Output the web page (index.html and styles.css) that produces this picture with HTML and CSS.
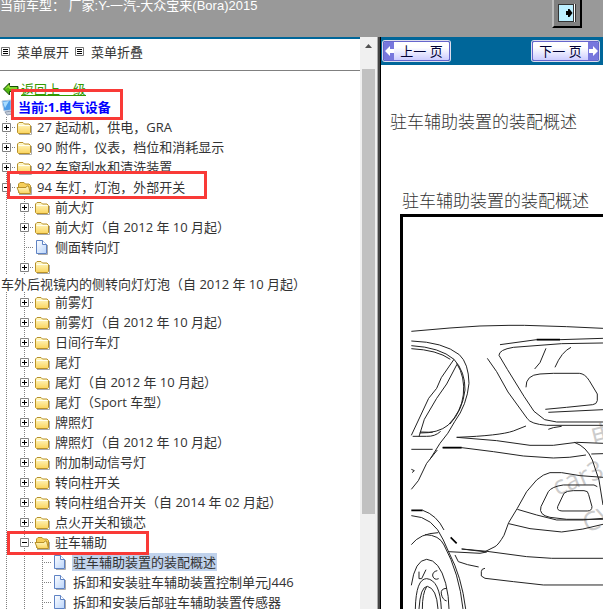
FILE: index.html
```
<!DOCTYPE html>
<html lang="zh-CN">
<head>
  <meta charset="UTF-8">
  <meta name="viewport" content="width=device-width, initial-scale=1.0">
  <title>驻车辅助装置的装配概述</title>
  <link rel="stylesheet" href="styles.css">
</head>
<body>

  <!-- icons used by the tree -->
  <svg class="sprite" width="0" height="0" aria-hidden="true">
    <defs>
      <linearGradient id="gold" x1="0" y1="0" x2="0" y2="1">
        <stop offset="0" stop-color="#fffbd0"/>
        <stop offset="1" stop-color="#fbd45c"/>
      </linearGradient>
      <linearGradient id="sheet" x1="0" y1="0" x2="1" y2="1">
        <stop offset="0" stop-color="#ffffff"/>
        <stop offset="1" stop-color="#b9d4fb"/>
      </linearGradient>
      <symbol id="folder" viewBox="0 -1 18 18">
        <path d="M3 15.500h12.500V7" fill="none" stroke="#aaa" stroke-width="1"/>
        <path d="M1.500 13.500V5l1.500-1.500h4L8.500 5H13l1.500 1.500v7l-1 1h-11z" fill="url(#gold)" stroke="#b8912a"/>
        <path d="M2.500 6.500h11" stroke="#fffef0" fill="none"/>
      </symbol>
      <symbol id="folder-open" viewBox="0 -1 18 18">
        <path d="M3 15.500h12.500V8" fill="none" stroke="#aaa" stroke-width="1"/>
        <path d="M2.500 13.500V5L4 3.500h4L9.500 5H13l1.500 1.500v7l-1 1h-10z" fill="#f6cf5a" stroke="#b8912a"/>
        <path d="M1 8.500h9l1-1.500h1.500l2 7.500h-11z" fill="url(#gold)" stroke="#b8912a"/>
      </symbol>
      <symbol id="page" viewBox="0 -1 18 18">
        <path d="M4 15.500h9.500V6" fill="none" stroke="#aaa"/>
        <path d="M2.500 1.500h6l4 4v9h-10z" fill="url(#sheet)" stroke="#5f83c4"/>
        <path d="M8.500 1.500v4h4" fill="#fff" stroke="#5f83c4"/>
      </symbol>
      <symbol id="plus" viewBox="0 0 9 9">
        <path d="M.5.5h8v8h-8z" fill="#fff" stroke="#808080"/>
        <path d="M2 4.500h5M4.500 2v5" stroke="#000"/>
      </symbol>
      <symbol id="minus" viewBox="0 0 9 9">
        <path d="M.5.5h8v8h-8z" fill="#fff" stroke="#808080"/>
        <path d="M2 4.500h5" stroke="#000"/>
      </symbol>
      <symbol id="list" viewBox="0 0 9 9">
        <path d="M.5.5h8v8h-8z" fill="#fff" stroke="#777"/>
        <path d="M2 2.500h5M2 4.500h5M2 6.500h5" stroke="#000"/>
      </symbol>
    </defs>
  </svg>

  <header class="topbar">
    <p class="car">当前车型： 厂家:Y-一汽-大众宝来(Bora)2015</p>
    <button class="exit" type="button" aria-label="退出">
      <svg width="18" height="18" viewBox="0 0 18 18">
        <path d="M0 0h18v18H0z" fill="#333"/>
        <path d="M1 1h14v16H1z" fill="#bdefff"/>
        <path d="M16.500 0v18" stroke="#fff" stroke-width="1"/>
        <path d="M8 7h2V5h1.500l3 4-3 4H10v-2H8z" fill="#000"/>
      </svg>
    </button>
  </header>

  <div class="frames">
    <nav class="menu">
      <div class="tools">
        <button type="button"><svg width="9" height="9"><use href="#list"/></svg>菜单展开</button>
        <button type="button"><svg width="9" height="9"><use href="#list"/></svg>菜单折叠</button>
      </div>

      <div class="tree">
        <div class="row back">
          <svg width="20" height="18" viewBox="0 0 20 18">
            <path d="M3.500 9l6-6v3.500H18v5H9.500V15z" fill="#4fb810" stroke="#174d05"/>
            <path d="M6 8.500l3-3v2.500h8" fill="none" stroke="#b7ef4b"/>
          </svg>
          <a href="#">返回上一级</a>
        </div>
        <div class="row root">
          <svg width="18" height="18" viewBox="0 0 18 18">
            <path d="M2 3l9-1v10l-7 1z" fill="#4a9be8" stroke="#b9cbe0"/>
            <path d="M3 4l6-1-4 7z" fill="#a9dcff"/>
            <path d="M5 14l7-1v3l-5 1z" fill="#c4ccd8" stroke="#8d9bb0"/>
          </svg>
          <a href="#">当前:1.电气设备</a>
        </div>

        <div class="row"><i class="join"><svg width="9" height="9"><use href="#plus"/></svg></i><svg class="icon"><use href="#folder"/></svg><a href="#">27 起动机，供电，GRA</a></div>
        <div class="row"><i class="join"><svg width="9" height="9"><use href="#plus"/></svg></i><svg class="icon"><use href="#folder"/></svg><a href="#">90 附件，仪表，档位和消耗显示</a></div>
        <div class="row"><i class="join"><svg width="9" height="9"><use href="#plus"/></svg></i><svg class="icon"><use href="#folder"/></svg><a href="#">92 车窗刮水和清洗装置</a></div>
        <div class="row"><i class="join"><svg width="9" height="9"><use href="#minus"/></svg></i><svg class="icon"><use href="#folder-open"/></svg><a href="#">94 车灯，灯泡，外部开关</a></div>

        <div class="branch">
          <div class="row"><i class="join"><svg width="9" height="9"><use href="#plus"/></svg></i><svg class="icon"><use href="#folder"/></svg><a href="#">前大灯</a></div>
          <div class="row"><i class="join"><svg width="9" height="9"><use href="#plus"/></svg></i><svg class="icon"><use href="#folder"/></svg><a href="#">前大灯（自 2012 年 10 月起）</a></div>
          <div class="row"><i class="join"></i><svg class="icon"><use href="#page"/></svg><a href="#">侧面转向灯</a></div>
          <div class="row short"><i class="join"><svg width="9" height="9"><use href="#plus"/></svg></i><svg class="icon"><use href="#folder"/></svg></div>
        </div>
        <div class="wrapped"><a href="#">车外后视镜内的侧转向灯灯泡（自 2012 年 10 月起）</a></div>
        <div class="branch">
          <div class="row"><i class="join"><svg width="9" height="9"><use href="#plus"/></svg></i><svg class="icon"><use href="#folder"/></svg><a href="#">前雾灯</a></div>
          <div class="row"><i class="join"><svg width="9" height="9"><use href="#plus"/></svg></i><svg class="icon"><use href="#folder"/></svg><a href="#">前雾灯（自 2012 年 10 月起）</a></div>
          <div class="row"><i class="join"><svg width="9" height="9"><use href="#plus"/></svg></i><svg class="icon"><use href="#folder"/></svg><a href="#">日间行车灯</a></div>
          <div class="row"><i class="join"><svg width="9" height="9"><use href="#plus"/></svg></i><svg class="icon"><use href="#folder"/></svg><a href="#">尾灯</a></div>
          <div class="row"><i class="join"><svg width="9" height="9"><use href="#plus"/></svg></i><svg class="icon"><use href="#folder"/></svg><a href="#">尾灯（自 2012 年 10 月起）</a></div>
          <div class="row"><i class="join"><svg width="9" height="9"><use href="#plus"/></svg></i><svg class="icon"><use href="#folder"/></svg><a href="#">尾灯（Sport 车型）</a></div>
          <div class="row"><i class="join"><svg width="9" height="9"><use href="#plus"/></svg></i><svg class="icon"><use href="#folder"/></svg><a href="#">牌照灯</a></div>
          <div class="row"><i class="join"><svg width="9" height="9"><use href="#plus"/></svg></i><svg class="icon"><use href="#folder"/></svg><a href="#">牌照灯（自 2012 年 10 月起）</a></div>
          <div class="row"><i class="join"><svg width="9" height="9"><use href="#plus"/></svg></i><svg class="icon"><use href="#folder"/></svg><a href="#">附加制动信号灯</a></div>
          <div class="row"><i class="join"><svg width="9" height="9"><use href="#plus"/></svg></i><svg class="icon"><use href="#folder"/></svg><a href="#">转向柱开关</a></div>
          <div class="row"><i class="join"><svg width="9" height="9"><use href="#plus"/></svg></i><svg class="icon"><use href="#folder"/></svg><a href="#">转向柱组合开关（自 2014 年 02 月起）</a></div>
          <div class="row"><i class="join"><svg width="9" height="9"><use href="#plus"/></svg></i><svg class="icon"><use href="#folder"/></svg><a href="#">点火开关和锁芯</a></div>
          <div class="row"><i class="join"><svg width="9" height="9"><use href="#minus"/></svg></i><svg class="icon"><use href="#folder-open"/></svg><a href="#">驻车辅助</a></div>
          <div class="branch">
            <div class="row"><i class="join"></i><svg class="icon"><use href="#page"/></svg><a class="selected" href="#">驻车辅助装置的装配概述</a></div>
            <div class="row"><i class="join"></i><svg class="icon"><use href="#page"/></svg><a href="#">拆卸和安装驻车辅助装置控制单元J446</a></div>
            <div class="row"><i class="join"></i><svg class="icon"><use href="#page"/></svg><a href="#">拆卸和安装后部驻车辅助装置传感器</a></div>
          </div>
        </div>
      </div>

      <div class="mark mark-root"></div>
      <div class="mark mark-lights"></div>
      <div class="mark mark-parking"></div>
    </nav>

    <div class="scrollbar">
      <svg width="17" height="17" viewBox="0 0 17 17"><path d="M5 11l3.500-4 3.500 4z" fill="#505050"/></svg>
      <div class="thumb"></div>
    </div>
    <div class="divider"></div>

    <main class="content">
      <div class="pager">
        <button class="prev" type="button"><span class="arrow"><svg width="9" height="10" viewBox="0 0 9 10"><path d="M0 5l5-5v3h4v4H5v3z" fill="#fff"/></svg></span><span class="label">上一 页</span></button>
        <button class="next" type="button"><span class="label">下一 页</span><span class="arrow"><svg width="9" height="10" viewBox="0 0 9 10"><path d="M9 5L4 0v3H0v4h4v3z" fill="#fff"/></svg></span></button>
      </div>
      <h1>驻车辅助装置的装配概述</h1>
      <h2>驻车辅助装置的装配概述</h2>
      <div class="figure">
        <svg width="100%" height="100%">
          <g class="watermark">
            <text x="154" y="279" transform="rotate(-22 154 279)">car3</text>
            <text x="184" y="316" transform="rotate(-22 184 316)">CV</text>
            <text x="190" y="230" transform="rotate(-14 190 230)">电</text>
          </g>
          <g class="car-lines" transform="translate(-23 93) scale(.3333)">
            <!-- roof -->
            <path d="M94 64L210 54 300 48 387 46H433L560 50 669 55"/>
            <!-- side window -->
            <path d="M94 93Q190 96 238 134Q266 160 267 220Q261 285 224 335Q205 372 180 400L150 448"/>
            <path d="M94 107Q180 112 222 148Q256 185 255 240Q248 300 210 342"/>
            <path d="M94 116Q172 120 211 148M230 160Q256 200 250 255Q244 305 205 345Q175 370 119 369"/>
            <path d="M222 148L184 203 170 235 146 265 94 376M231 163L200 222 170 265 133 328 117 380M120 366L158 367M98 379H140Q165 380 182 364"/>
            <!-- rear window -->
            <path d="M360 104L470 89H540L669 85M669 99L545 101 400 112Q357 119 357 136L382 178 432 259 462 304 494 329 530 336H669"/>
            <path d="M322 145L350 185 384 246 442 326Q452 342 500 346H669"/>
            <path d="M498 115L480 158 464 177M573 112Q545 125 525 172M438 232Q437 195 480 192L520 190H598Q615 191 628 212L652 252V272Q650 283 638 284L560 292 496 298M505 307L669 299M505 358L520 353 545 349"/>
            <!-- boot and waist line -->
            <path d="M438 348L400 363Q360 377 230 382L350 392 450 406H520L590 397 669 400M94 418H158M188 413H245L340 425 430 438 520 444Q570 444 618 435M634 432L669 431M583 397Q620 410 637 450L657 510 669 585"/>
            <path class="bold" d="M188 413H245M470 89H540"/>
            <!-- bumper -->
            <path d="M94 538L115 512 140 460 172 420M94 478L103 482 96 488"/>
            <path d="M669 502L600 497 545 488H510Q490 492 470 510L440 545 412 595 386 638 372 676Q355 705 345 710L315 725"/>
            <path d="M412 598L470 615 530 630H610L669 625M386 641L450 656 545 666Q610 660 669 643"/>
            <path d="M652 530L642 525H550Q515 530 505 545L483 590Q475 615 510 622L560 628H669"/>
            <path d="M580 542H612Q625 542 626 554L636 590Q636 603 622 603H546Q530 602 533 590L552 550Q560 542 580 542"/>
            <path d="M205 725L300 730 320 726 245 717 320 724 440 740 515 745H669M225 735L235 755Q260 765 296 771M315 775Q304 776 304 785V798L315 805 400 815 490 825H669"/>
            <!-- wheel -->
            <path class="bold" d="M94 601H128M212 682L230 700"/>
            <path d="M128 601Q170 615 192 660M94 617Q160 620 190 690L207 728Q245 800 257 897M94 704Q120 670 175 668M135 674Q178 675 192 705Q238 790 249 897"/>
            <path d="M94 826Q105 750 140 748Q178 750 197 820Q207 860 207 897M106 897Q108 806 140 806Q180 810 184 897M117 897Q121 830 142 829Q170 835 174 897M127 897Q127 850 140 830"/>
            <path d="M117 785V806L125 806 138 779M172 782Q157 785 158 798Q163 812 176 806M200 835Q181 836 184 852Q188 870 200 873"/>
          </g>
        </svg>
      </div>
    </main>
  </div>

</body>
</html>
```

FILE: styles.css
```
* {
  box-sizing: border-box;
}

body {
  margin: 0;
  height: 100vh;
  display: flex;
  flex-direction: column;
  overflow: hidden;
  background: #fff;
  color: #333;
  font-family: "Open Sans", "Noto Sans CJK SC", sans-serif;
  font-size: 13px;
}

a {
  color: inherit;
  text-decoration: none;
}

button {
  font: inherit;
  color: inherit;
  cursor: pointer;
}

.sprite {
  position: absolute;
}

/* top bar */
.topbar {
  flex: none;
  height: 37px;
  display: flex;
  justify-content: space-between;
  align-items: flex-start;
  padding-right: 21px;
  background: #999;
  color: #fff;
}

.car {
  margin: 0;
  line-height: 12px;
  font-family: "Liberation Sans", "Noto Sans CJK SC", sans-serif;
  white-space: nowrap;
}

.exit {
  width: 30px;
  height: 28px;
  padding: 0;
  display: flex;
  align-items: center;
  justify-content: center;
  background: #808080;
  border: 2px solid #bbb;
  border-right-color: #000;
  border-bottom-color: #000;
  border-top: 0;
}

.frames {
  flex: 1;
  min-height: 0;
  display: flex;
}

/* left menu */
.menu {
  position: relative;
  flex: none;
  width: 360px;
  overflow: hidden;
  border-top: 2px solid #069;
}

.tools {
  display: flex;
  gap: 6px;
  height: 32px;
  padding: 0 1px 6px;
  border-bottom: 1px solid #808080;
}

.tools button {
  display: flex;
  align-items: center;
  gap: 7px;
  padding: 0;
  background: none;
  border: 0;
}

.tree {
  padding-top: 9px;
  white-space: nowrap;
}

.row {
  display: flex;
  align-items: center;
  height: 20px;
  line-height: 18px;
}

.row a {
  padding: 0 1px;
}

.row.back {
  height: 17px;
}

.back a {
  color: #390;
  text-decoration: underline;
}

.root a {
  padding: 0;
  color: #00f;
  font-weight: bold;
}

.icon {
  width: 18px;
  height: 18px;
  margin-right: 2px;
}

.join {
  width: 16px;
  height: 20px;
  padding: 6px 0 0 2px;
  background:
    repeating-linear-gradient(#808080 0 1px, transparent 1px 2px) 6px 0 / 1px 100% no-repeat,
    repeating-linear-gradient(90deg, #808080 0 1px, transparent 1px 2px) 6px 10px / 10px 1px no-repeat;
}

.join svg {
  display: block;
}

.branch {
  padding-left: 18px;
  background: repeating-linear-gradient(#808080 0 1px, transparent 1px 2px) 6px 0 / 1px 100% no-repeat;
}

.short,
.short .join {
  height: 18px;
}

.wrapped {
  height: 17px;
  line-height: 19px;
  padding-left: 1px;
}

.selected {
  background: #c0d2ec;
}

.mark {
  position: absolute;
  border: 3px solid #f93a37;
}

.mark-root {
  left: 11px;
  top: 50px;
  width: 112px;
  height: 31px;
}

.mark-lights {
  left: 7px;
  top: 132px;
  width: 200px;
  height: 28px;
}

.mark-parking {
  left: 7px;
  top: 492px;
  width: 142px;
  height: 24px;
}

/* scrollbar and frame divider */
.scrollbar {
  flex: none;
  width: 17px;
  padding-bottom: 95px;
  display: flex;
  flex-direction: column;
  align-items: center;
  gap: 15px;
  background: #f0f0f0;
}

.scrollbar svg {
  flex: none;
}

.thumb {
  flex: 1;
  width: 13px;
  background: #c1c1c1;
}

.divider {
  flex: none;
  width: 4px;
  background: #444;
  border-left: 1px solid #aaa;
  border-right: 1px solid #000;
}

/* right side */
.content {
  flex: 1;
  min-width: 0;
  display: flex;
  flex-direction: column;
}

.pager {
  flex: none;
  height: 28px;
  display: flex;
  align-items: center;
  justify-content: space-between;
  padding: 0 4px 0 2px;
  background: #069;
}

.pager button {
  display: flex;
  align-items: stretch;
  height: 20px;
  width: 67px;
  padding: 0;
  overflow: hidden;
  border: 1px solid #66c;
  border-radius: 2px;
  background: linear-gradient(#fff 30%, #ccf);
  color: #003;
  box-shadow: 0 0 0 1px #dde;
}

.arrow {
  flex: none;
  width: 10px;
  display: flex;
  align-items: center;
  justify-content: center;
  background: #77d;
}

.label {
  flex: 1;
  line-height: 18px;
  text-align: center;
  white-space: nowrap;
}

.content h1,
.content h2 {
  flex: none;
  margin: 0;
  font-size: 17px;
  line-height: 24px;
  font-weight: 300;
  white-space: nowrap;
}

.content h1 {
  padding: 45px 0 0 9px;
}

.content h2 {
  padding: 55px 0 0 21px;
}

.figure {
  flex: 1;
  min-height: 0;
  margin: 1px 0 0 19px;
  border-top: 3px solid #000;
  border-left: 3px solid #000;
}

.figure svg {
  display: block;
}

.car-lines path {
  fill: none;
  stroke: #222;
  stroke-width: 3;
}

.car-lines .bold {
  stroke: #000;
  stroke-width: 5;
}

.watermark {
  fill: #ccc;
  font-size: 26px;
}
```
